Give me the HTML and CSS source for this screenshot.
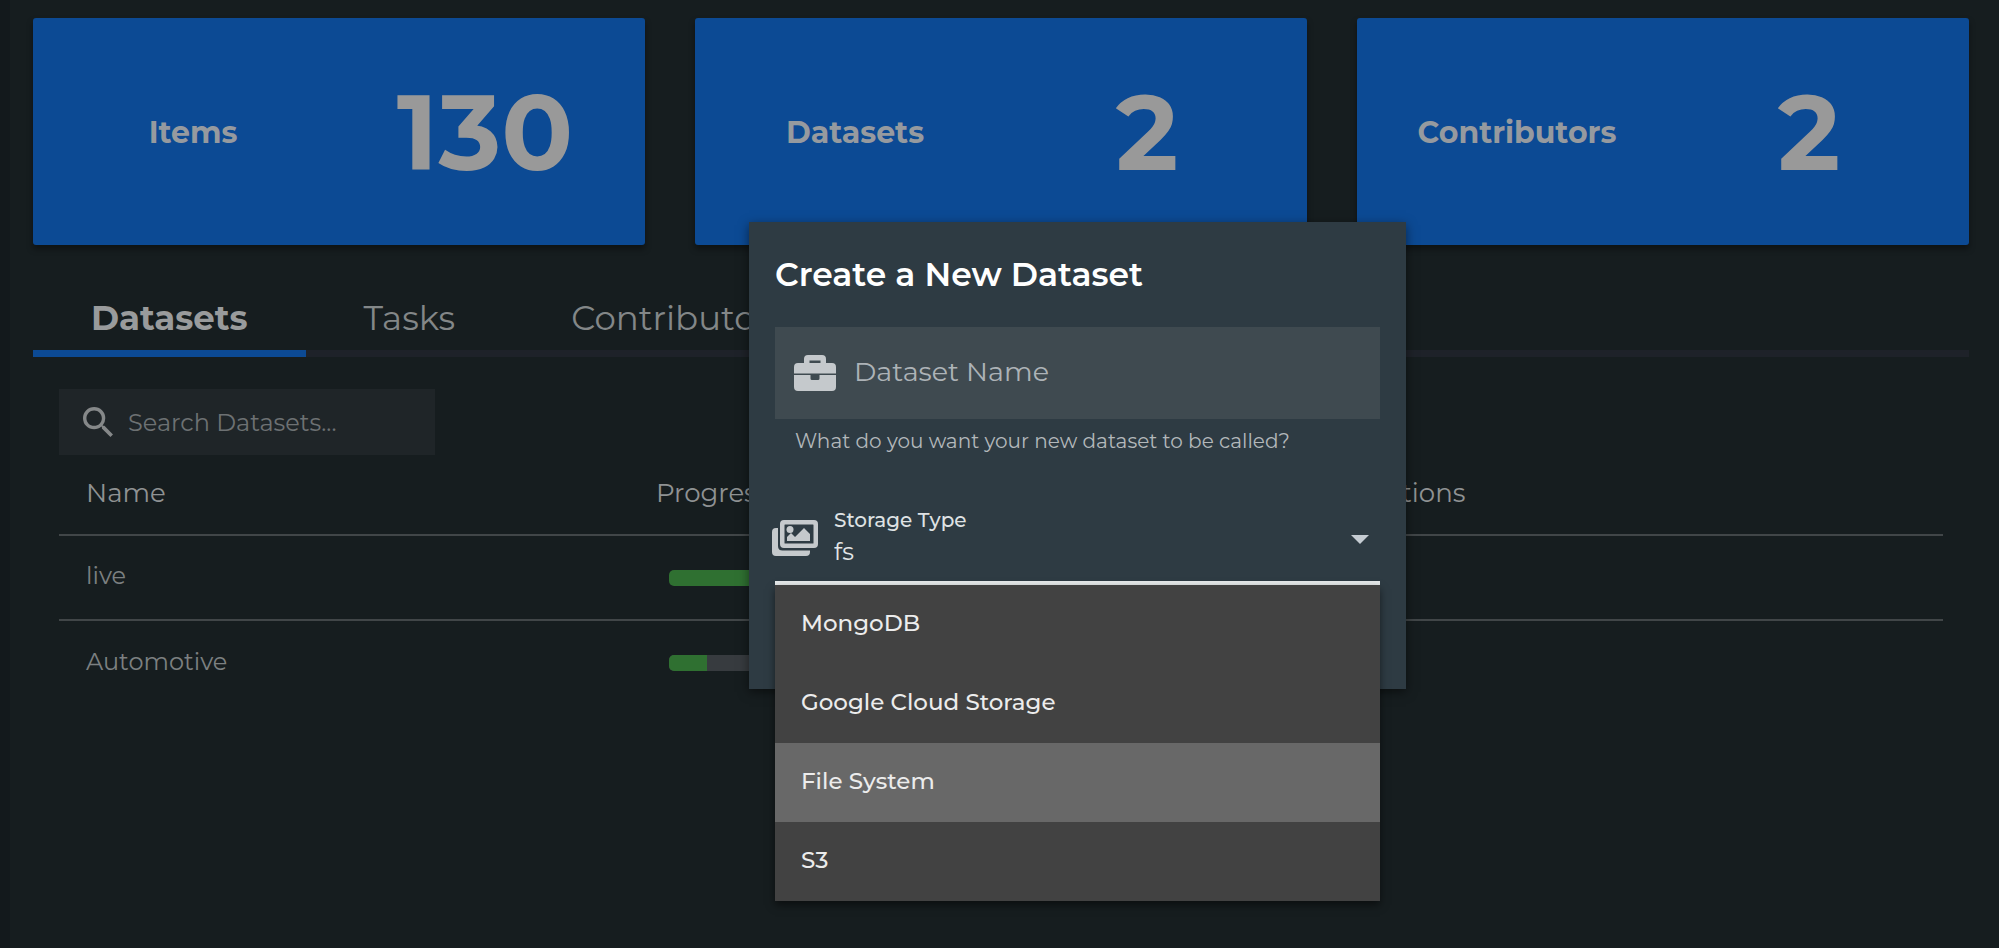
FILE: index.html
```html
<!DOCTYPE html>
<html lang="en">
<head>
<meta charset="utf-8">
<meta name="viewport" content="width=device-width, initial-scale=1">
<title>Datasets</title>
<link rel="stylesheet" href="styles.css">
</head>
<body>
<main class="page">
  <section class="stats">
    <article class="stat"><h2 class="stat-label">Items</h2><p class="stat-value">130</p></article>
    <article class="stat"><h2 class="stat-label">Datasets</h2><p class="stat-value">2</p></article>
    <article class="stat"><h2 class="stat-label">Contributors</h2><p class="stat-value">2</p></article>
  </section>

  <nav class="tabs" role="tablist">
    <button class="tab tab-active" role="tab" aria-selected="true">Datasets</button>
    <button class="tab" role="tab" aria-selected="false">Tasks</button>
    <button class="tab" role="tab" aria-selected="false">Contributors</button>
  </nav>

  <section class="panel">
    <label class="search">
      <svg class="search-icon" viewBox="3 3 17.5 17.5" aria-hidden="true"><path d="M15.5 14h-.79l-.28-.27A6.47 6.47 0 0 0 16 9.5 6.5 6.5 0 1 0 9.5 16c1.61 0 3.09-.59 4.23-1.57l.27.28v.79l5 4.99L20.49 19l-4.99-5zm-6 0C7.01 14 5 11.99 5 9.5S7.01 5 9.5 5 14 7.01 14 9.5 11.99 14 9.5 14z"/></svg>
      <input class="search-input" type="search" placeholder="Search Datasets..." aria-label="Search Datasets">
    </label>
    <table class="table">
      <thead>
        <tr><th class="col-name">Name</th><th class="col-progress">Progress</th><th>Actions</th></tr>
      </thead>
      <tbody>
        <tr><td class="name">live</td><td><div class="bar"><div class="bar-fill" style="width:100%"></div></div></td><td></td></tr>
        <tr><td class="name">Automotive</td><td><div class="bar"><div class="bar-fill" style="width:10%"></div></div></td><td></td></tr>
      </tbody>
    </table>
  </section>
</main>

<div class="overlay">
  <form class="dialog" role="dialog" aria-labelledby="dialog-title">
    <h1 class="dialog-title" id="dialog-title">Create a New Dataset</h1>
    <label class="field">
      <svg class="field-icon" viewBox="0 0 42 36" aria-hidden="true"><path fill-rule="evenodd" d="M10 8V4q0-4 4-4h14q4 0 4 4v4h6q4 0 4 4v6.500H0V12q0-4 4-4zM15.500 5.500v2.500h11V5.500z"/><path d="M0 20h16.500v3.500q0 1.500 1.500 1.500h6q1.500 0 1.500-1.500V20H42v12q0 4-4 4H4q-4 0-4-4z"/></svg>
      <input class="field-input" type="text" placeholder="Dataset Name" aria-describedby="name-hint" aria-label="Dataset Name">
    </label>
    <p class="hint" id="name-hint">What do you want your new dataset to be called?</p>
    <div class="storage">
      <svg class="storage-icon" viewBox="0 0 46 36" aria-hidden="true"><path fill-rule="evenodd" d="M12 0h30q4 0 4 4v20q0 4-4 4H12q-4 0-4-4V4q0-4 4-4zm1 4.500q-.5 0-.5.5v18q0 .5.5.5h28q.5 0 .5-.5V5q0-.5-.5-.5z"/><circle cx="18" cy="9.500" r="3.500"/><path d="M15 21v-4l4-4 4 4 9-9 6 6v7z"/><path d="M6 8v18q0 4.500 4.500 4.500H38V32q0 4-4 4H4q-4 0-4-4V12q0-4 4-4z"/></svg>
      <div class="storage-text">
        <label class="storage-label" for="storage">Storage Type</label>
        <select class="storage-select" id="storage"><option>fs</option></select>
      </div>
      <svg class="caret" viewBox="0 0 18 9" aria-hidden="true"><path d="M0 0h18l-9 9z"/></svg>
      <div class="menu" role="listbox" aria-label="Storage Type">
        <button class="option" type="button" role="option">MongoDB</button>
        <button class="option" type="button" role="option">Google Cloud Storage</button>
        <button class="option option-selected" type="button" role="option" aria-selected="true">File System</button>
        <button class="option" type="button" role="option">S3</button>
      </div>
    </div>
  </form>
</div>
</body>
</html>
```
FILE: styles.css
```css
* { box-sizing: border-box; }

body {
  margin: 0;
  min-height: 100vh;
  background: #161d1f;
  color: #8b8e8f;
  font-family: Montserrat, Inter, sans-serif;
}

button, input, select { font: inherit; color: inherit; }
h1, h2, p { margin: 0; }

.page {
  min-height: 100vh;
  padding: 18px 30px 0 23px;
  border-left: 10px solid #13191c;
}

.stats {
  display: grid;
  grid-template-columns: repeat(3, 1fr);
  gap: 50px;
}

.stat {
  display: grid;
  grid-template-columns: 1fr 1fr;
  align-items: center;
  justify-items: center;
  height: 227px;
  padding: 0 14px;
  border-radius: 3px;
  background: #0c4a94;
  box-shadow: 0 4px 6px rgba(0, 0, 0, 0.4);
}

.stat-label { padding-top: 2px; color: #969a9f; font-size: 30px; font-weight: 700; }
.stat-value { color: #999; font-size: 106px; font-weight: 700; line-height: 120px; }

.tabs {
  display: flex;
  height: 112px;
  padding-top: 36px;
  border-bottom: 7px solid #1e2229;
}

.tab {
  height: 76px;
  padding: 4px 58px 0;
  border: 0;
  border-bottom: 7px solid transparent;
  background: none;
  color: #838788;
  font-size: 34px;
}

.tab-active { border-color: #0c4a94; color: #999b9c; font-weight: 700; }

.panel { padding: 32px 26px 0; }

.search {
  display: flex;
  align-items: center;
  gap: 15px;
  width: 376px;
  height: 66px;
  padding: 0 24px;
  background: #1f2528;
}

.search-icon { flex: none; width: 30px; height: 30px; fill: #858889; }

.search-input {
  flex: 1;
  min-width: 0;
  padding: 0;
  border: 0;
  background: none;
  font-size: 24px;
}

.search-input::placeholder { color: #6d7173; opacity: 1; }

.table { width: 100%; border-collapse: collapse; table-layout: fixed; }
.table tr { height: 85px; }
.table thead tr { height: 80px; }
.table tbody tr { border-top: 2px solid #414648; }
.table th, .table td { padding: 0 27px; text-align: left; font-weight: 400; }
.table th { padding-bottom: 4px; font-size: 26px; color: #8f9293; }
.table td { font-size: 24px; color: #7c8081; }
.table .name { padding-bottom: 4px; }
.col-name { width: 570px; }
.col-progress { width: 712px; }

.bar {
  width: 380px;
  height: 16px;
  margin-left: 13px;
  overflow: hidden;
  border-radius: 5px;
  background: #373b3f;
}

.bar-fill { height: 16px; background: #2f7031; }

.overlay {
  position: absolute;
  inset: 0;
  display: flex;
  align-items: flex-start;
  justify-content: center;
  padding: 222px 0 0 156px;
}

.dialog {
  width: 657px;
  height: 467px;
  padding: 26px;
  background: #2e3b43;
  box-shadow: 0 3px 10px rgba(0, 0, 0, 0.5);
}

.dialog-title { color: #fff; font-size: 33px; font-weight: 600; line-height: 52px; }

.field {
  display: flex;
  align-items: center;
  gap: 18px;
  height: 92px;
  margin-top: 27px;
  padding: 0 19px;
  background: #3f4a50;
}

.field-icon { flex: none; width: 42px; height: 36px; fill: #c5c9cc; }

.field-input {
  flex: 1;
  min-width: 0;
  padding: 0 0 3px;
  border: 0;
  background: none;
  font-size: 27px;
}

.field-input::placeholder { color: #adb3b7; opacity: 1; }

.hint {
  margin-top: 5px;
  padding-left: 20px;
  color: #b3b8bb;
  font-size: 20px;
  line-height: 34px;
}

.storage {
  position: relative;
  display: flex;
  align-items: center;
  gap: 16px;
  height: 94px;
  margin-top: 33px;
  padding-right: 11px;
  border-bottom: 4px solid #e6e9ea;
}

.storage-icon { flex: none; width: 46px; height: 36px; margin: 4px 0 0 -3px; fill: #c5c9cc; }
.storage-text { flex: 1; display: flex; flex-direction: column; }
.storage-label { color: #dfe2e4; font-size: 20px; font-weight: 500; line-height: 30px; }

.storage-select {
  height: 32px;
  padding: 0;
  border: 0;
  appearance: none;
  background: none;
  color: #e3e6e8;
  font-size: 24px;
}

.caret { width: 18px; height: 9px; margin-top: 6px; fill: #c5ccd2; }

.menu {
  position: absolute;
  top: 94px;
  left: 0;
  right: 0;
  background: #424242;
  box-shadow: 0 4px 8px rgba(0, 0, 0, 0.5);
}

.option {
  display: block;
  width: 100%;
  height: 79px;
  padding: 0 26px 4px;
  border: 0;
  background: none;
  color: #ececec;
  font-size: 23px;
  font-weight: 500;
  text-align: left;
}

.option-selected { background: #686868; }
```
